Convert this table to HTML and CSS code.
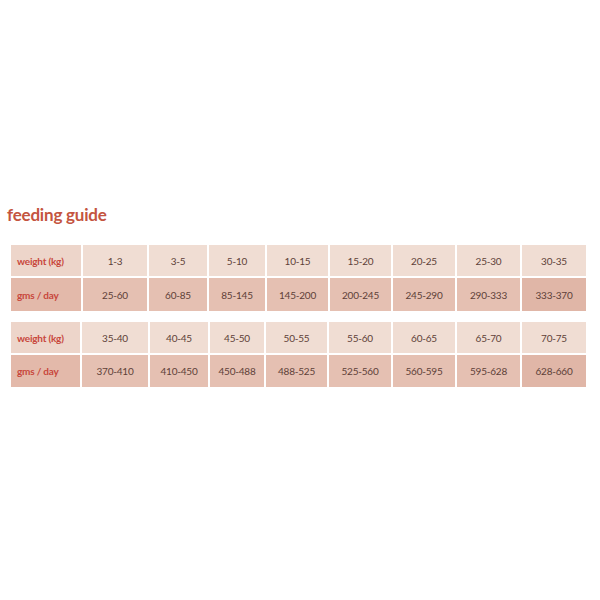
FILE: index.html
```html
<!DOCTYPE html>
<html>
<head>
<meta charset="utf-8">
<link rel="stylesheet" href="styles.css">
</head>
<body>
<div class="page">
  <h1 class="title">feeding guide</h1>
  <div class="grid grid-a">
    <div class="cell lbl r1">weight (kg)</div>
    <div class="cell r1">1-3</div>
    <div class="cell r1">3-5</div>
    <div class="cell r1">5-10</div>
    <div class="cell r1">10-15</div>
    <div class="cell r1">15-20</div>
    <div class="cell r1">20-25</div>
    <div class="cell r1">25-30</div>
    <div class="cell r1">30-35</div>
    <div class="cell lbl r2">gms / day</div>
    <div class="cell r2">25-60</div>
    <div class="cell r2">60-85</div>
    <div class="cell r2">85-145</div>
    <div class="cell r2">145-200</div>
    <div class="cell r2">200-245</div>
    <div class="cell r2">245-290</div>
    <div class="cell r2">290-333</div>
    <div class="cell r2 last">333-370</div>
  </div>
  <div class="grid grid-b">
    <div class="cell lbl r1">weight (kg)</div>
    <div class="cell r1">35-40</div>
    <div class="cell r1">40-45</div>
    <div class="cell r1">45-50</div>
    <div class="cell r1">50-55</div>
    <div class="cell r1">55-60</div>
    <div class="cell r1">60-65</div>
    <div class="cell r1">65-70</div>
    <div class="cell r1">70-75</div>
    <div class="cell lbl r2">gms / day</div>
    <div class="cell r2">370-410</div>
    <div class="cell r2">410-450</div>
    <div class="cell r2">450-488</div>
    <div class="cell r2">488-525</div>
    <div class="cell r2">525-560</div>
    <div class="cell r2">560-595</div>
    <div class="cell r2">595-628</div>
    <div class="cell r2 last">628-660</div>
  </div>
</div>
</body>
</html>
```

FILE: styles.css
```css
html, body {
  margin: 0;
  padding: 0;
  background: #ffffff;
}
.page {
  width: 600px;
  height: 600px;
  padding-top: 203px;
  box-sizing: border-box;
  font-family: "Lato", "Open Sans", sans-serif;
}
.title {
  margin: 0 0 0 7px;
  font-size: 17px;
  line-height: 24px;
  font-weight: 700;
  color: #c45440;
  letter-spacing: -0.2px;
}
.grid {
  display: grid;
  column-gap: 2px;
  row-gap: 2px;
  margin-left: 11px;
}
.grid-a {
  margin-top: 18px;
  grid-template-columns: 70px 64px 58px 56px 61px 61px 62px 63px 64px;
  grid-template-rows: 31px 33px;
}
.grid-b {
  margin-top: 11px;
  grid-template-columns: 69px 66px 58px 54px 61px 62px 62px 63px 64px;
  grid-template-rows: 31px 32px;
}
.cell {
  display: flex;
  align-items: center;
  justify-content: center;
  font-size: 10px;
  color: #5e3f38;
  letter-spacing: -0.2px;
}
.r1 {
  background: #f0ddd3;
}
.r2 {
  background: #e5c0b2;
}
.lbl {
  justify-content: flex-start;
  padding-left: 6px;
  font-weight: 700;
  color: #c8473c;
}
.lbl.r1 {
  background: #edd5ca;
}
.lbl.r2 {
  background: #e3b9aa;
}
.r2.last {
  background: #e0b6a7;
}
```
